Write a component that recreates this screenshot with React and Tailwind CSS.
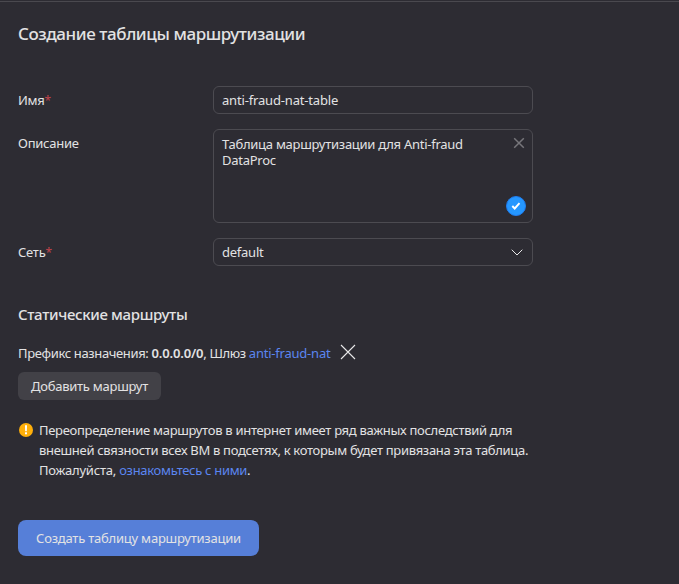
import React from "react";

function Label({ children, required }) {
  return (
    <div className="w-[195px] shrink-0 pt-1 leading-5 tracking-[-0.25px]">
      {children}
      {required && <span className="text-[12px] text-[#c0444b]">*</span>}
    </div>
  );
}

export default function App() {
  return (
    <main className="flex h-[584px] w-[679px] flex-col items-start overflow-hidden border-t border-[#2d2c33] bg-[#2d2c33] text-[13px] leading-5 text-[#e2e2e3] font-['Noto_Sans','Open_Sans',sans-serif]">
      <div className="h-px w-full shrink-0 bg-[#4a494f]" />
      <div className="flex flex-col items-start pl-[18px]">
        <h1 className="mt-5 text-[17px] leading-6 font-[550] tracking-[-0.42px] whitespace-nowrap">Создание таблицы маршрутизации</h1>

        <div className="mt-10 flex flex-col gap-[15px]">
          <div className="flex">
            <Label required>Имя</Label>
            <div className="flex h-7 w-80 items-center rounded-md border border-[#4c4b51] px-2 tracking-[-0.17px]">anti-fraud-nat-table</div>
          </div>
          <div className="flex">
            <Label>Описание</Label>
            <div className="flex h-[94px] w-80 justify-between rounded-md border border-[#4c4b51] pt-[6px] pl-2 leading-4 tracking-[-0.26px]">
              <p className="w-[260px]">Таблица маршрутизации для Anti-fraud DataProc</p>
              <div className="flex flex-col items-end justify-between pr-[6px] pb-[6px]">
                <svg className="mt-px mr-px size-3" viewBox="0 0 12 12" fill="none" stroke="#77767b" strokeWidth="1.5">
                  <path d="M1.2 1.2l9.6 9.6M10.8 1.2l-9.6 9.6" />
                </svg>
                <svg className="size-5" viewBox="0 0 20 20" fill="none">
                  <circle cx="10" cy="10" r="9.5" fill="#2597ff" stroke="#1f7df0" />
                  <path d="M6.3 10l2.4 2.5 4.8-5.3" stroke="#fff" strokeWidth="1.9" />
                </svg>
              </div>
            </div>
          </div>
          <div className="flex">
            <Label required>Сеть</Label>
            <div className="flex h-7 w-80 items-center justify-between rounded-md border border-[#4c4b51] pr-[9px] pl-2">
              <span className="tracking-[-0.25px]">default</span>
              <svg className="h-3 w-3" viewBox="0 0 12 12" fill="none" stroke="#e8e8e9" strokeWidth="1">
                <path d="M.7 3.7L6 9l5.3-5.3" />
              </svg>
            </div>
          </div>
        </div>

        <h2 className="mt-[38px] text-[15px] leading-5 font-medium tracking-[-0.33px] whitespace-nowrap">Статические маршруты</h2>
        <div className="mt-[19px] flex items-center whitespace-nowrap">
          <span className="tracking-[-0.36px]">
            Префикс назначения: <span className="font-semibold tracking-[-0.15px]">0.0.0.0/0</span>, Шлюз{" "}
            <a className="tracking-[-0.22px] text-[#5b86f0]">anti-fraud-nat</a>
          </span>
          <svg className="mb-[3px] ml-[10px] size-4" viewBox="0 0 16 16" fill="none" stroke="#e8e8e9" strokeWidth="1.1">
            <path d="M1 1l14 14M15 1L1 15" />
          </svg>
        </div>
        <button className="mt-[9px] h-7 w-[143px] rounded-md bg-[#424147] tracking-[-0.25px] whitespace-nowrap">Добавить маршрут</button>

        <div className="mt-5 flex items-start gap-[6px]">
          <svg className="mt-[3px] ml-px size-[14px]" viewBox="0 0 14 14">
            <circle cx="7" cy="7" r="7" fill="#ffaf0a" />
            <path d="M6 2.3h2L7.8 8.2H6.2z" fill="#fff" />
            <rect x="6" y="9.3" width="2" height="2" fill="#fff" />
          </svg>
          <p className="tracking-[-0.31px] whitespace-nowrap">
            <span className="tracking-[-0.295px]">Переопределение маршрутов в интернет имеет ряд важных последствий для</span>
            <br />
            внешней связности всех ВМ в подсетях, к которым будет привязана эта таблица.
            <br />
            <span className="tracking-[-0.21px]">Пожалуйста, </span>
            <a className="text-[#5b86f0]">ознакомьтесь с ними</a>.
          </p>
        </div>

        <button className="mt-10 h-9 w-[241px] rounded-lg bg-[#567fd8] tracking-[-0.22px] whitespace-nowrap">Создать таблицу маршрутизации</button>
      </div>
    </main>
  );
}
